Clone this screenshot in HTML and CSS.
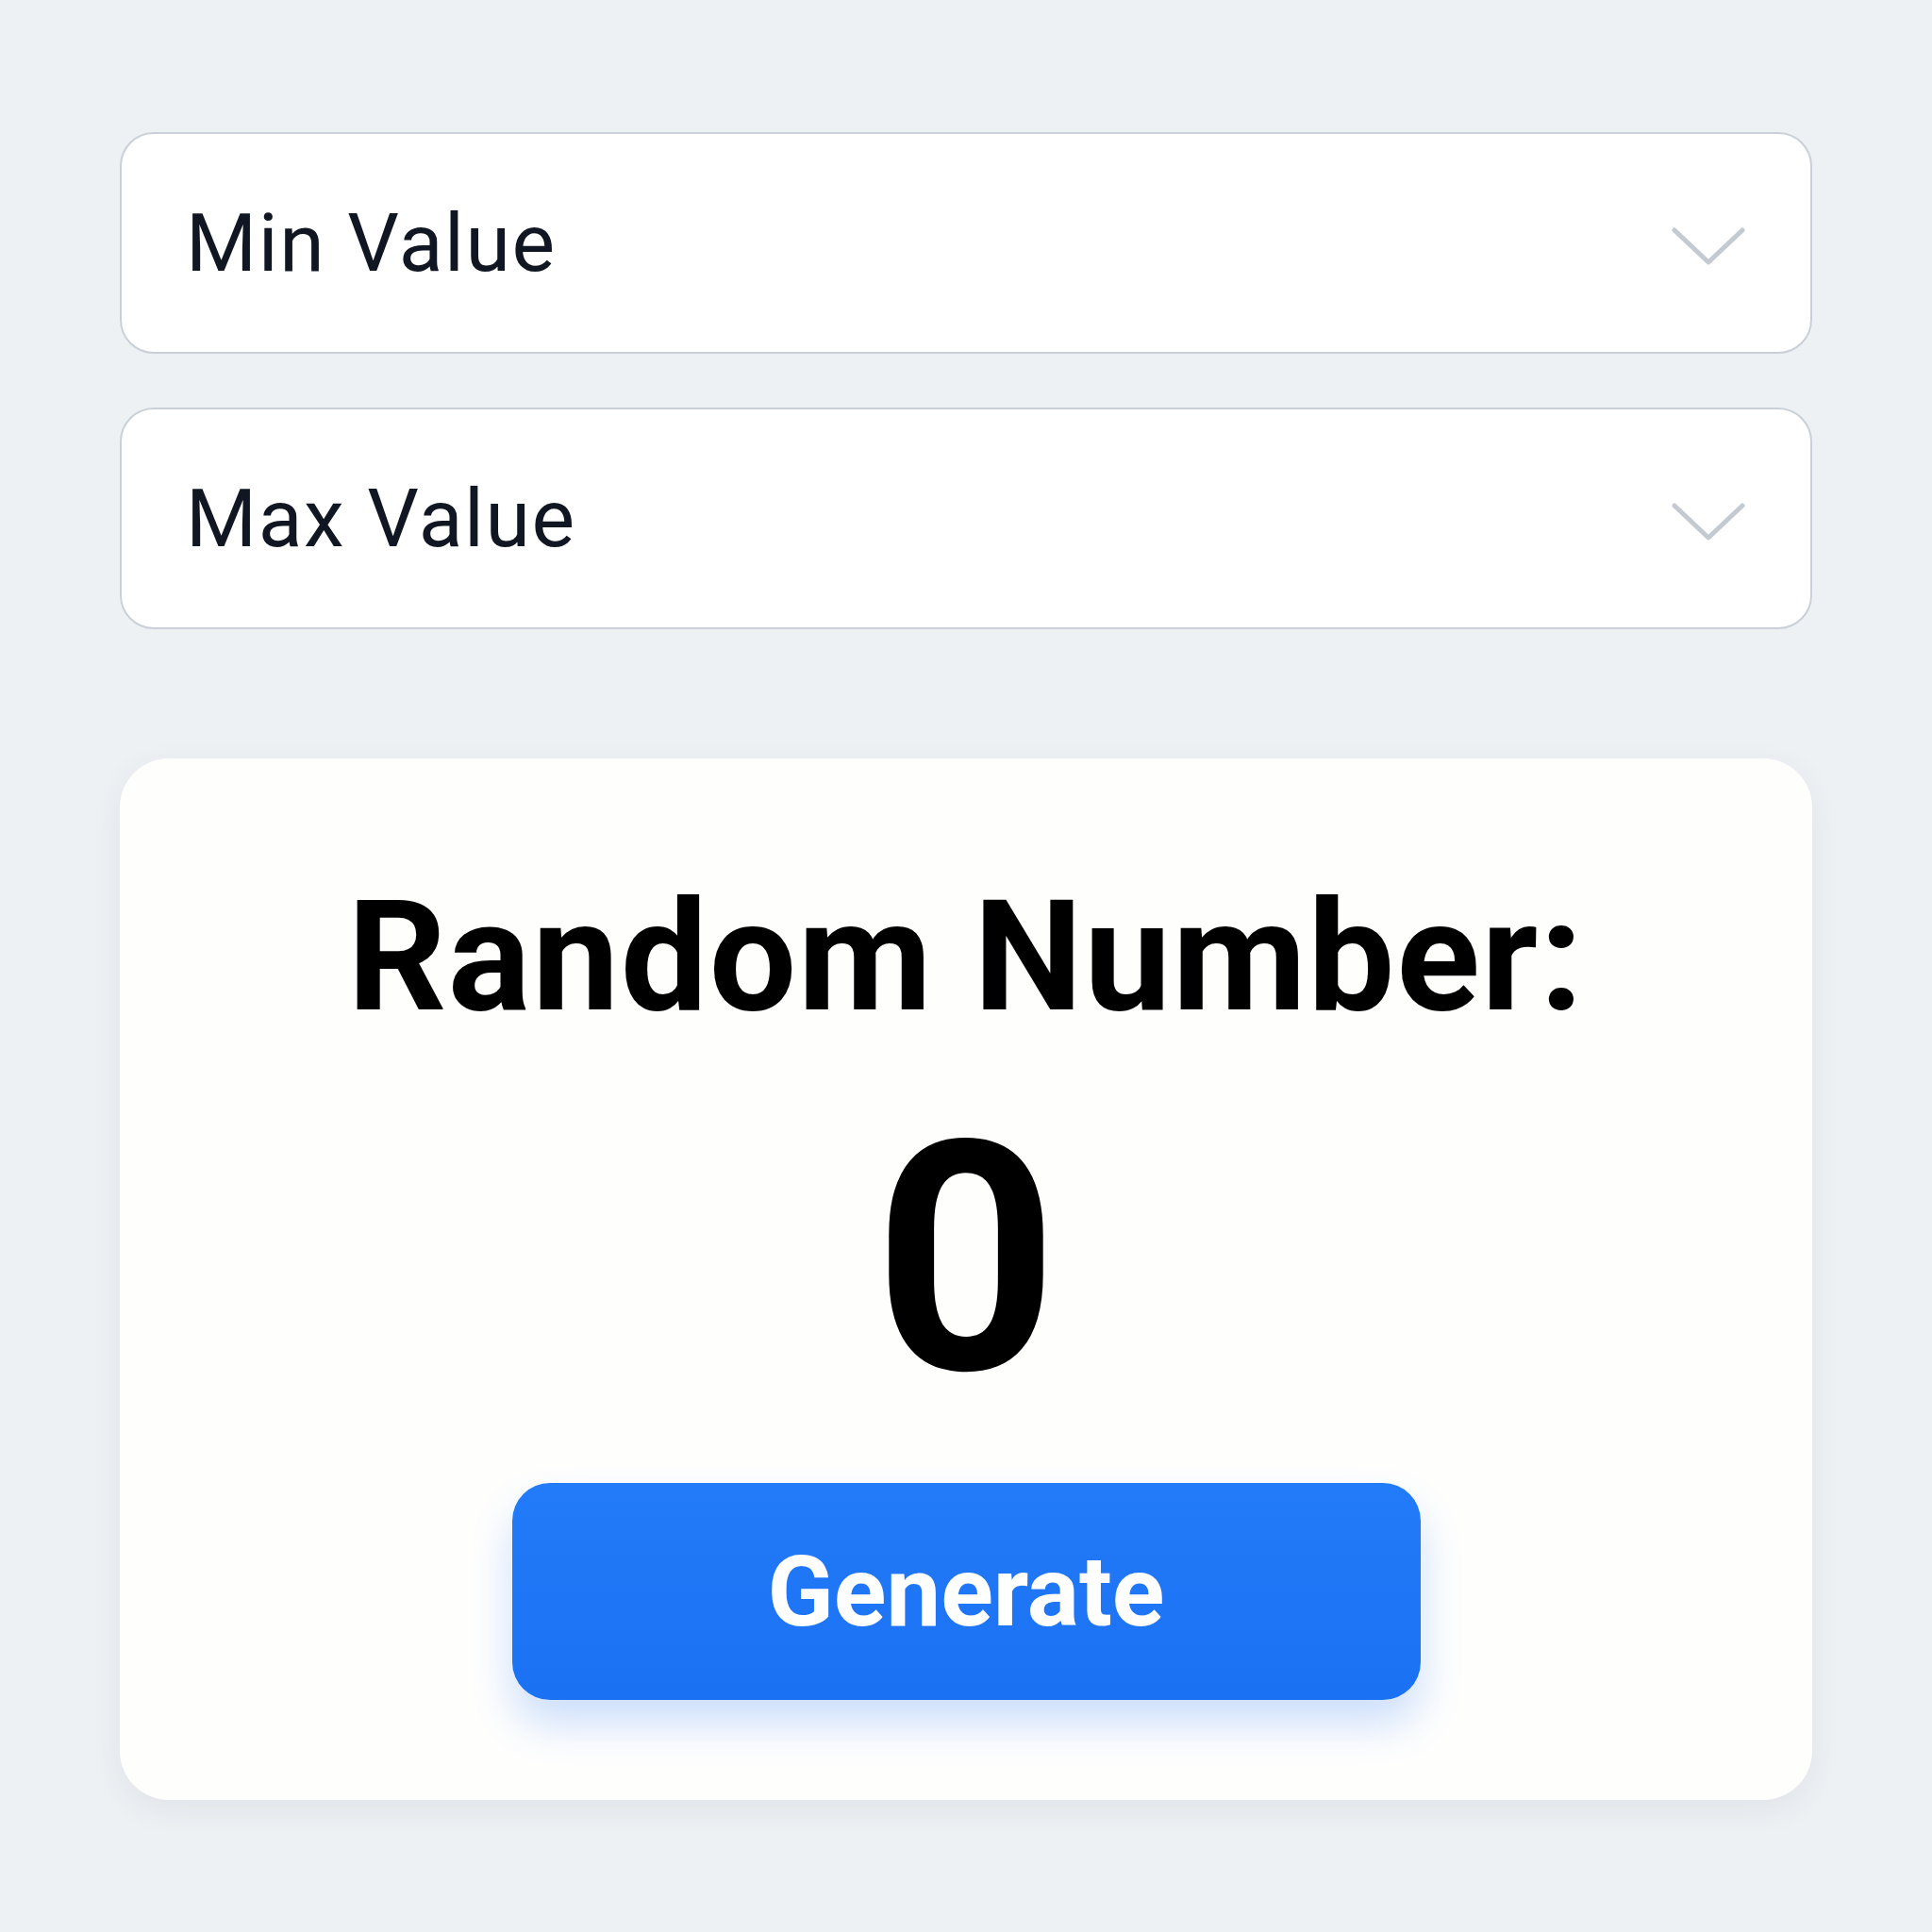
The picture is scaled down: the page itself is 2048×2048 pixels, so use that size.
FILE: index.html
```html
<!DOCTYPE html>
<html lang="en">
<head>
<meta charset="utf-8">
<title>Random Number</title>
<link rel="stylesheet" href="styles.css">
</head>
<body>
<main class="page">
  <div class="select">
    <span class="select-label">Min Value</span>
    <svg class="chevron" viewBox="0 0 80 42" width="80" height="42"><polyline points="4,4 40,38 76,4"/></svg>
  </div>
  <div class="select">
    <span class="select-label">Max Value</span>
    <svg class="chevron" viewBox="0 0 80 42" width="80" height="42"><polyline points="4,4 40,38 76,4"/></svg>
  </div>
  <section class="card">
    <h1 class="title">Random Number:</h1>
    <div class="result">0</div>
    <button class="generate" type="button">Generate</button>
  </section>
</main>
</body>
</html>
```

FILE: styles.css
```css
html, body {
  margin: 0;
  padding: 0;
}
body {
  width: 2048px;
  height: 2048px;
  background: #eef1f4;
  font-family: Roboto, "Liberation Sans", sans-serif;
}
.page {
  box-sizing: border-box;
  width: 2048px;
  padding: 140px 127px 0;
  display: flex;
  flex-direction: column;
}
.select {
  box-sizing: border-box;
  height: 235px;
  background: #ffffff;
  border: 2px solid #c9d0d8;
  border-radius: 36px;
  display: flex;
  align-items: center;
  justify-content: space-between;
  padding: 0 68px 0 68px;
}
.select + .select {
  margin-top: 57px;
}
.select-label {
  font-size: 86px;
  line-height: 1;
  letter-spacing: 1.6px;
  color: #111722;
  font-weight: 400;
}
.chevron {
  fill: none;
  stroke: #c3cad2;
  stroke-width: 5;
  stroke-linecap: round;
  stroke-linejoin: round;
  margin-top: 6px;
}
.card {
  margin-top: 137px;
  box-sizing: border-box;
  height: 1104px;
  background: #fefefd;
  border-radius: 52px;
  box-shadow: 0 10px 34px rgba(40, 50, 70, 0.07);
  display: flex;
  flex-direction: column;
  align-items: center;
  padding-top: 128px;
}
.title {
  margin: 0;
  font-size: 164px;
  line-height: 1;
  letter-spacing: 1.6px;
  font-weight: 700;
  color: #000;
}
.result {
  margin-top: 69px;
  font-size: 340px;
  line-height: 1;
  font-weight: 700;
  color: #000;
}
.generate {
  margin-top: 67px;
  width: 963px;
  height: 230px;
  border: none;
  border-radius: 40px;
  background: linear-gradient(180deg, #227bf8 0%, #1b71f3 100%);
  color: #ffffff;
  font-family: Roboto, "Liberation Sans", sans-serif;
  font-size: 103px;
  font-weight: 700;
  line-height: 1;
  box-shadow: 0 26px 44px rgba(30, 115, 245, 0.22);
  padding: 0;
}
```
